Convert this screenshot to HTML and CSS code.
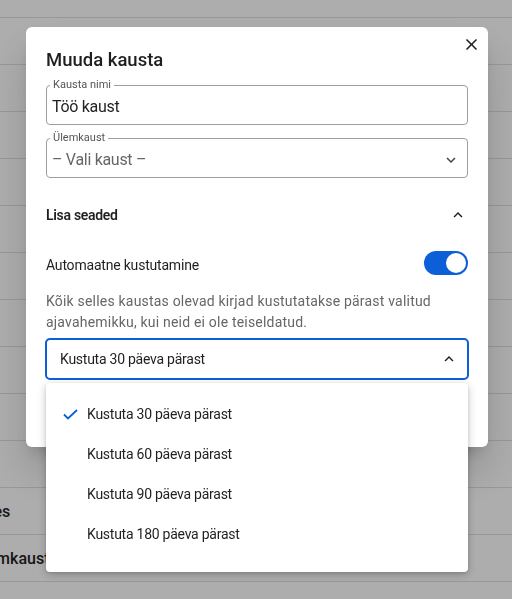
FILE: index.html
```html
<!DOCTYPE html>
<html lang="et">
<head>
<meta charset="utf-8">
<title>Muuda kausta</title>
<link rel="stylesheet" href="styles.css">
</head>
<body>
<div class="page">
  <div class="row"></div>
  <div class="row"></div>
  <div class="row"></div>
  <div class="row"></div>
  <div class="row"></div>
  <div class="row"></div>
  <div class="row"></div>
  <div class="row"></div>
  <div class="row"></div>
  <div class="row"></div>
  <div class="row"></div>
  <div class="row"><span class="row-label row-label-a">Kirjades</span></div>
  <div class="row"><span class="row-label row-label-b">Ülemkaust</span></div>
</div>

<div class="backdrop">
  <div class="dialog">
    <div class="dialog-header">
      <h2 class="dialog-title">Muuda kausta</h2>
      <button class="close-btn" type="button" aria-label="Sulge">
        <svg width="19" height="19" viewBox="0 0 24 24"><path d="M19 6.41L17.59 5 12 10.59 6.41 5 5 6.41 10.59 12 5 17.59 6.41 19 12 13.41 17.59 19 19 17.59 13.41 12z" fill="#1f1f1f"/></svg>
      </button>
    </div>

    <fieldset class="field">
      <legend class="field-label">Kausta nimi</legend>
      <div class="field-value">Töö kaust</div>
    </fieldset>

    <fieldset class="field field-second">
      <legend class="field-label">Ülemkaust</legend>
      <div class="field-value field-placeholder">
        <span>– Vali kaust –</span>
        <svg class="chev-down" width="18" height="18" viewBox="0 0 24 24"><path d="M16.59 8.59L12 13.17 7.41 8.59 6 10l6 6 6-6z" fill="#444"/></svg>
      </div>
    </fieldset>

    <div class="section-head">
      <span>Lisa seaded</span>
      <svg width="18" height="18" viewBox="0 0 24 24"><path d="M12 8l-6 6 1.41 1.41L12 10.83l4.59 4.58L18 14z" fill="#1f1f1f"/></svg>
    </div>

    <div class="toggle-row">
      <span class="toggle-label">Automaatne kustutamine</span>
      <span class="switch"><span class="knob"></span></span>
    </div>

    <p class="hint">Kõik selles kaustas olevad kirjad kustutatakse pärast valitud ajavahemikku, kui neid ei ole teiseldatud.</p>

    <div class="select-wrap">
      <div class="select">
        <span>Kustuta 30 päeva pärast</span>
        <svg width="18" height="18" viewBox="0 0 24 24"><path d="M12 8l-6 6 1.41 1.41L12 10.83l4.59 4.58L18 14z" fill="#1f1f1f"/></svg>
      </div>
      <ul class="menu">
        <li class="menu-item">
          <span class="check"><svg width="15" height="11" viewBox="0 0 15 11"><polyline points="1,5.5 5,9.5 14,1" fill="none" stroke="#0c5fd6" stroke-width="1.8"/></svg></span>
          <span>Kustuta 30 päeva pärast</span>
        </li>
        <li class="menu-item"><span class="check"></span><span>Kustuta 60 päeva pärast</span></li>
        <li class="menu-item"><span class="check"></span><span>Kustuta 90 päeva pärast</span></li>
        <li class="menu-item"><span class="check"></span><span>Kustuta 180 päeva pärast</span></li>
      </ul>
    </div>
  </div>
</div>
</body>
</html>
```

FILE: styles.css
```css
* { box-sizing: border-box; }

html, body {
  margin: 0;
  padding: 0;
  background: #ffffff;
  font-family: Roboto, "Noto Sans", "Liberation Sans", sans-serif;
  color: #1f1f1f;
  overflow: hidden;
}

.page {
  margin-top: -29px;
}

.row {
  height: 47px;
  border-bottom: 1px solid #e0e0e0;
  display: flex;
  align-items: center;
  font-size: 16px;
  font-weight: 500;
  white-space: nowrap;
}

.row-label-a { margin-left: -48px; }
.row-label-b { margin-left: -27px; }

.backdrop {
  position: fixed;
  inset: 0;
  background: rgba(0, 0, 0, 0.32);
  padding: 27px 0 0 26px;
}

.dialog {
  width: 462px;
  background: #ffffff;
  border-radius: 6px;
  padding: 19px 20px 67px;
  box-shadow: 0 11px 15px -7px rgba(0,0,0,.2), 0 24px 38px 3px rgba(0,0,0,.14);
}

.dialog-header {
  display: flex;
  justify-content: space-between;
  align-items: flex-start;
}

.dialog-title {
  margin: 0;
  font-size: 18.5px;
  line-height: 28px;
  font-weight: 500;
  color: #1f1f1f;
}

.close-btn {
  width: 24px;
  height: 24px;
  margin: -14px -15px 0 0;
  padding: 0;
  border: 0;
  background: transparent;
  display: flex;
  align-items: center;
  justify-content: center;
}

.field {
  margin: 5px 0 0;
  padding: 0 5px;
  border: 1px solid #9e9e9e;
  border-radius: 4px;
  min-width: 0;
}

.field-second {
  margin-top: 7px;
}

.field-label {
  margin-left: -2px;
  padding: 0 3px;
  font-size: 11px;
  line-height: 12px;
  color: #555555;
}

.field-value {
  font-size: 16px;
  letter-spacing: -0.3px;
  line-height: 25px;
  padding: 3px 0 5px;
  color: #1f1f1f;
}

.field-placeholder {
  display: flex;
  justify-content: space-between;
  align-items: center;
  color: #666666;
}

.chev-down {
  margin-right: 2px;
}

.section-head {
  margin-top: 17px;
  height: 40px;
  display: flex;
  justify-content: space-between;
  align-items: center;
  font-size: 14px;
  font-weight: 600;
  letter-spacing: -0.3px;
}

.section-head svg {
  margin-right: 1px;
}

.toggle-row {
  margin-top: 16px;
  height: 24px;
  display: flex;
  justify-content: space-between;
  align-items: center;
}

.toggle-label {
  font-size: 14px;
  letter-spacing: -0.2px;
  margin-top: 4px;
}

.switch {
  width: 44px;
  height: 24px;
  border-radius: 12px;
  background: #0c5fd6;
  display: flex;
  justify-content: flex-end;
  align-items: center;
  padding: 2px;
}

.knob {
  width: 20px;
  height: 20px;
  border-radius: 50%;
  background: #ffffff;
}

.hint {
  margin: 16px 0 0;
  font-size: 14px;
  line-height: 21px;
  letter-spacing: 0.2px;
  color: #666666;
}

.select-wrap {
  position: relative;
  margin-top: 5px;
}

.select {
  margin: 0 -1px;
  height: 42px;
  border: 2px solid #0c5fd6;
  border-radius: 5px;
  padding: 0 9px 0 13px;
  display: flex;
  justify-content: space-between;
  align-items: center;
  font-size: 14px;
  letter-spacing: -0.25px;
  color: #1f1f1f;
}

.menu {
  position: absolute;
  top: calc(100% + 3px);
  left: 0;
  right: 0;
  margin: 0;
  padding: 11px 0 18px;
  list-style: none;
  background: #ffffff;
  border-radius: 4px;
  box-shadow: 0 3px 10px rgba(0,0,0,.22), 0 1px 3px rgba(0,0,0,.12);
}

.menu-item {
  height: 40px;
  display: flex;
  align-items: center;
  padding-left: 17px;
  font-size: 14px;
  letter-spacing: -0.25px;
  color: #1f1f1f;
}

.check {
  width: 24px;
  display: flex;
  align-items: center;
}
```
